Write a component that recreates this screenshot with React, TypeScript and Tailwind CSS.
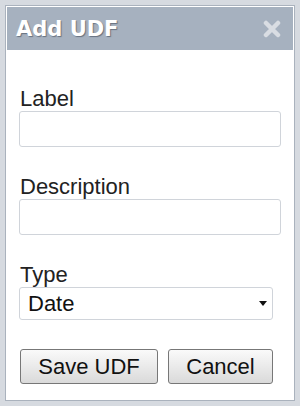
import {useState} from "react";

const FONT = "font-['Liberation_Sans',Arial,sans-serif]";

export default function App() {
  const [label, setLabel] = useState('');
  const [description, setDescription] = useState('');
  const [type, setType] = useState('Date');

  return (
    <div className={`w-[300px] h-[406px] bg-[#d6dae0] p-[5px] ${FONT}`}>
      <div className="h-full flex flex-col border border-[#aab2bd] bg-white">
        <div className="p-[1px] pb-0">
          <div className="h-[43px] bg-[#a6b1bf] flex items-center pl-[9px] pr-[12px]">
            <div
              className="flex-1 font-['DejaVu_Sans',Verdana,sans-serif] font-bold text-[21px] leading-[24px] text-white [text-shadow:1px_1px_1px_rgba(60,70,85,0.6)]"
            >
              Add UDF
            </div>
            <svg width="18" height="18" viewBox="0 0 18 18">
              <path d="M3 3 L15 15 M15 3 L3 15" stroke="#d9dde3" strokeWidth="4.5" strokeLinecap="round"/>
            </svg>
          </div>
        </div>

        <div className="flex-1 flex flex-col px-[13px] pt-[37px]">
          <FieldLabel text="Label"/>
          <input
            className="h-[36px] w-[262px] border border-[#d0d4da] rounded-[3px] px-2 text-[20px] outline-none"
            value={label}
            onChange={(e) => setLabel(e.target.value)}
          />

          <div className="h-[28px]"/>
          <FieldLabel text="Description"/>
          <input
            className="h-[36px] w-[262px] border border-[#d0d4da] rounded-[3px] px-2 text-[20px] outline-none"
            value={description}
            onChange={(e) => setDescription(e.target.value)}
          />

          <div className="h-[28px]"/>
          <FieldLabel text="Type"/>
          <div className="relative w-[254px] h-[33px]">
            <select
              className="appearance-none w-full h-full border border-[#d0d4da] rounded-[3px] bg-white pl-[8px] text-[22px] leading-[24px] text-[#111] outline-none"
              value={type}
              onChange={(e) => setType(e.target.value)}
            >
              <option>Date</option>
              <option>Text</option>
              <option>Number</option>
            </select>
            <svg className="absolute right-[6px] top-[14px] pointer-events-none" width="8" height="5" viewBox="0 0 8 5">
              <path d="M0 0 H8 L4 5 Z" fill="#111"/>
            </svg>
          </div>

          <div className="h-[29px]"/>
          <div className="flex gap-[10px] pl-[1px]">
            <button className="w-[138px] h-[35px] border border-[#777] rounded-[3px] bg-gradient-to-b from-[#fafafa] to-[#dadada] text-[22px] text-[#111]">
              Save UDF
            </button>
            <button className="w-[105px] h-[35px] border border-[#777] rounded-[3px] bg-gradient-to-b from-[#fafafa] to-[#dadada] text-[22px] text-[#111]">
              Cancel
            </button>
          </div>
        </div>
      </div>
    </div>
  );
}

function FieldLabel({text}: {text: string}) {
  return (
    <div className="text-[22px] leading-[24px] text-[#222] pl-[1px]">
      {text}
    </div>
  );
}
